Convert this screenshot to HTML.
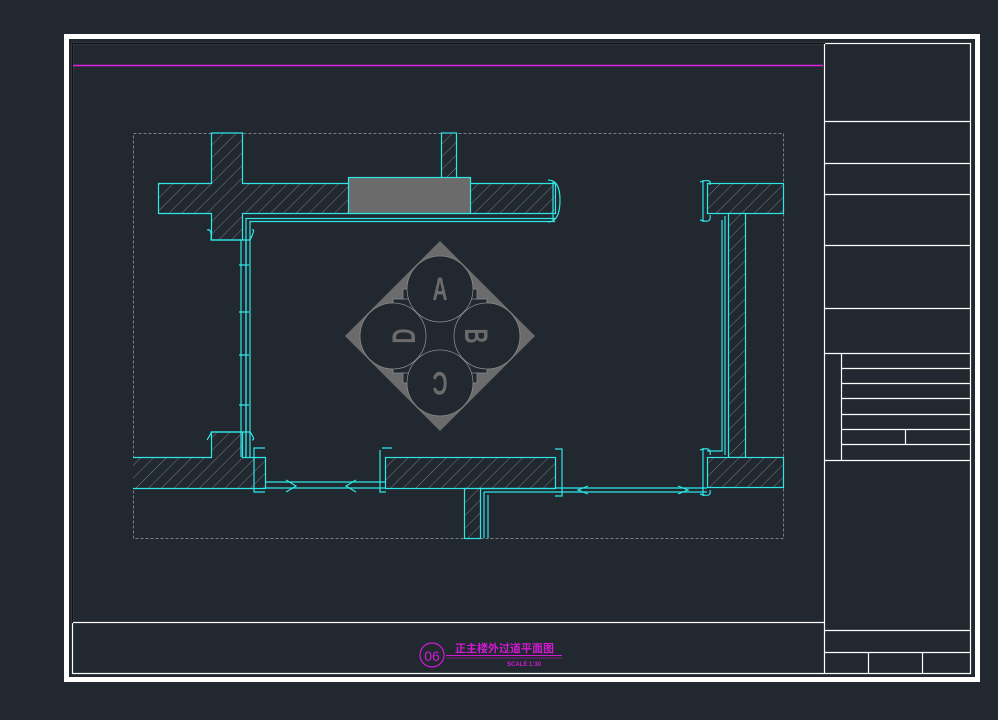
<!DOCTYPE html>
<html><head><meta charset="utf-8"><style>
html,body{margin:0;padding:0;background:#212830;width:998px;height:720px;overflow:hidden}
svg{display:block}
</style></head><body>
<svg width="998" height="720" viewBox="0 0 998 720" xmlns="http://www.w3.org/2000/svg">
<defs>
<pattern id="h" patternUnits="userSpaceOnUse" width="9" height="9" patternTransform="rotate(45)">
<rect width="9" height="9" fill="#212830"/><line x1="0" y1="0" x2="0" y2="9" stroke="#8a9096" stroke-width="0.8"/>
</pattern>
</defs>
<rect width="998" height="720" fill="#212830"/>
<rect x="66.5" y="36.5" width="911" height="643" fill="none" stroke="#fff" stroke-width="5"/>
<rect x="72.5" y="43.5" width="898" height="630" fill="none" stroke="#fff" stroke-width="1.2"/>
<rect x="72.5" y="43.5" width="752" height="579" fill="none" stroke="#111" stroke-width="1.2"/>
<line x1="73" y1="65.5" x2="823" y2="65.5" stroke="#e020e0" stroke-width="1.4"/>
<g stroke="#fff" stroke-width="1.2" fill="none">
<line x1="824.5" y1="44" x2="824.5" y2="674"/>
<line x1="825" y1="121.5" x2="970" y2="121.5"/>
<line x1="825" y1="163.5" x2="970" y2="163.5"/>
<line x1="825" y1="194.5" x2="970" y2="194.5"/>
<line x1="825" y1="245.5" x2="970" y2="245.5"/>
<line x1="825" y1="308.5" x2="970" y2="308.5"/>
<line x1="825" y1="353.5" x2="970" y2="353.5"/>
<line x1="841" y1="368.5" x2="970" y2="368.5"/>
<line x1="841" y1="383.5" x2="970" y2="383.5"/>
<line x1="841" y1="398.5" x2="970" y2="398.5"/>
<line x1="841" y1="414.5" x2="970" y2="414.5"/>
<line x1="841" y1="429.5" x2="970" y2="429.5"/>
<line x1="841" y1="444.5" x2="970" y2="444.5"/>
<line x1="825" y1="460.5" x2="970" y2="460.5"/>
<line x1="841.5" y1="353" x2="841.5" y2="460"/>
<line x1="905.5" y1="429" x2="905.5" y2="444"/>
<line x1="73" y1="622.5" x2="824" y2="622.5"/>
<line x1="825" y1="630.5" x2="970" y2="630.5"/>
<line x1="825" y1="652.5" x2="970" y2="652.5"/>
<line x1="868.5" y1="652" x2="868.5" y2="674"/>
<line x1="922.5" y1="652" x2="922.5" y2="674"/>
</g>
<rect x="133.5" y="133.5" width="650" height="405" fill="none" stroke="#7a8088" stroke-width="1" stroke-dasharray="3,2"/>
<g fill="url(#h)" stroke="#2ee6e6" stroke-width="1.2">
<path d="M158.5 183.5 H211.5 V133 H242.5 V183.5 H555.5 V213.5 H242.5 V240 H211.5 V213.5 H158.5 Z"/>
<rect x="441.5" y="133" width="15" height="45"/>
<rect x="707.5" y="183.5" width="76" height="30"/>
<rect x="728.5" y="213.5" width="17" height="244"/>
<rect x="707.5" y="457.5" width="76" height="30"/>
<path d="M133 457.5 H211.5 V432 H242.5 V457.5 H265.5 V488.5 H133"/>
<rect x="385.5" y="457.5" width="170" height="31"/>
<rect x="464.5" y="488.5" width="16" height="50"/>
</g>
<rect x="348.5" y="177.5" width="122" height="36" fill="#6b6b6b" stroke="#2ee6e6" stroke-width="1.2"/>
<g fill="none" stroke="#2ee6e6" stroke-width="1.2">
<path d="M246 457 V218.5 H555"/>
<path d="M250 457 V221.5 H555"/>
<path d="M241 240 V457 M246 240 V457"/>
<path d="M207 230 Q212 228 211 240 H250 Q256 228 252 230"/>
<path d="M207 440 Q212 432 211 432 H250 Q256 440 252 440"/>
<path d="M548 180 Q560 180 560 200 Q560 222 548 222 M553 182 V220"/>
<path d="M265 482 H385 M265 488 H385"/>
<path d="M265 448 H254 V492 H265"/>
<path d="M380 450 V492 H386 M382 448 H392"/>
<path d="M555 449 H562 V496 H555"/>
<path d="M555 488 H707 M555 492 H707"/>
<path d="M480 488.5 H555 M484 492 V538 M488 495 V538 M484 492 H555"/>
<path d="M722 220 V451 H707 M725 216 V455"/>
<path d="M703 180 V222 M700 182 Q712 178 710 185 M700 220 Q712 224 710 215"/>
<path d="M703 448 V496 M700 450 Q712 446 710 455 M700 494 Q712 498 710 490"/>
<path d="M286 480 L296 486 L286 492 M356 480 L346 486 L356 492"/>
<path d="M588 486 L578 490 L588 494 M678 486 L688 490 L678 494"/>
<path d="M239 265 H249 M239 312 H249 M239 355 H249 M239 405 H249"/>
</g>
<polygon points="440,241 535,336 440,431 345,336" fill="#6b6b6b"/>
<g fill="#212830" stroke="#8a8a8a" stroke-width="0.8">
<rect x="403" y="289" width="74" height="94"/>
<rect x="393" y="299" width="94" height="74"/>
<circle cx="440" cy="289" r="33"/>
<circle cx="487" cy="336" r="33"/>
<circle cx="440" cy="383" r="33"/>
<circle cx="393" cy="336" r="33"/>
</g>
<g fill="#6b6b6b" font-family="Liberation Sans, sans-serif" font-size="32" font-weight="bold" text-anchor="middle">
<text x="0" y="0" transform="translate(440,289) scale(0.65,1)" dy="11">A</text>
<text x="0" y="0" transform="translate(476,336) rotate(90) scale(0.65,1)" dy="11">B</text>
<text x="0" y="0" transform="translate(440,383) rotate(180) scale(0.65,1)" dy="11">C</text>
<text x="0" y="0" transform="translate(404,336) rotate(-90) scale(0.65,1)" dy="11">D</text>
</g>
<circle cx="432" cy="655" r="12" fill="none" stroke="#d21ad2" stroke-width="1.2"/>
<text x="432" y="661" fill="#d21ad2" font-family="Liberation Sans, sans-serif" font-size="14" text-anchor="middle">06</text>
<text x="455" y="652" fill="#d21ad2" font-family="Liberation Sans, 'Noto Sans CJK SC', sans-serif" font-size="11" font-weight="bold">正主楼外过道平面图</text>
<line x1="446" y1="655.5" x2="562" y2="655.5" stroke="#d21ad2" stroke-width="1"/>
<line x1="446" y1="658" x2="562" y2="658" stroke="#d21ad2" stroke-width="0.6"/>
<text x="507" y="666" fill="#d21ad2" font-family="Liberation Sans, sans-serif" font-size="6" font-weight="bold">SCALE 1:30</text>
</svg>
</body></html>
